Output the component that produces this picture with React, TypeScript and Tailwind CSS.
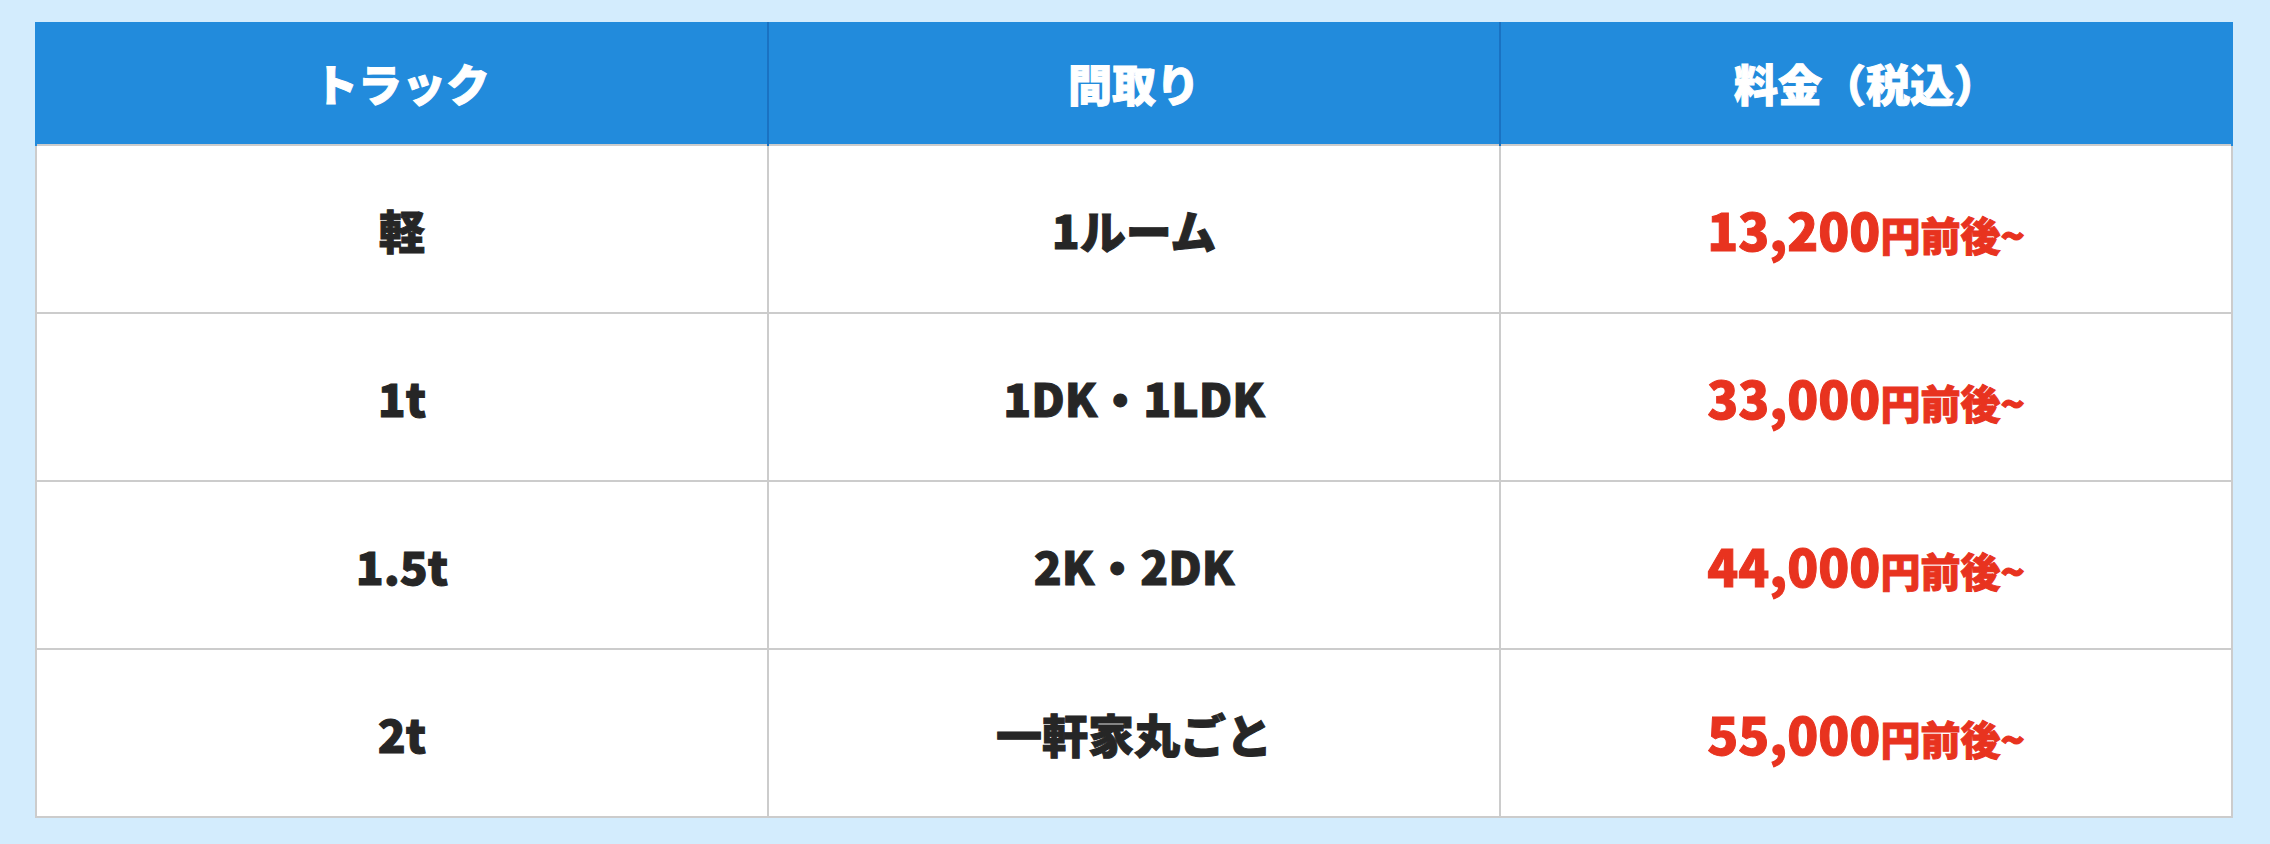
import React from "react";

const rows = [
  { truck: "軽", room: "1ルーム", price: "13,200" },
  { truck: "1t", room: "1DK・1LDK", price: "33,000" },
  { truck: "1.5t", room: "2K・2DK", price: "44,000" },
  { truck: "2t", room: "一軒家丸ごと", price: "55,000" },
];

export default function App() {
  return (
    <div
      className="w-[2270px] h-[844px] bg-[#d3ecfd] pt-[22px] pl-[35px]"
      style={{ fontFamily: '"Noto Sans CJK JP", "Noto Sans", sans-serif' }}
    >
      <table className="w-[2198px] border-collapse table-fixed [-webkit-text-stroke:1px_currentColor]">
        <thead>
          <tr className="h-[123px] bg-[#228bdc]">
            <th className="border-x-2 border-l-[#228bdc] border-r-[#1a72c2] text-white text-[44px] font-black align-middle">
              トラック
            </th>
            <th className="border-x-2 border-[#1a72c2] text-white text-[44px] font-black align-middle">
              間取り
            </th>
            <th className="border-x-2 border-l-[#1a72c2] border-r-[#228bdc] text-white text-[44px] font-black align-middle">
              料金（税込）
            </th>
          </tr>
        </thead>
        <tbody>
          {rows.map((r) => (
            <tr key={r.truck} className="h-[168px] bg-white">
              <td className="border-2 border-[#cccccc] text-center align-middle text-[46px] font-black text-[#262626]">
                {r.truck}
              </td>
              <td className="border-2 border-[#cccccc] text-center align-middle text-[46px] font-black text-[#262626]">
                {r.room}
              </td>
              <td className="border-2 border-[#cccccc] text-center align-middle font-black text-[#e8331f]">
                <span className="text-[51px]">{r.price}</span>
                <span className="text-[40px]">円前後~</span>
              </td>
            </tr>
          ))}
        </tbody>
      </table>
    </div>
  );
}
